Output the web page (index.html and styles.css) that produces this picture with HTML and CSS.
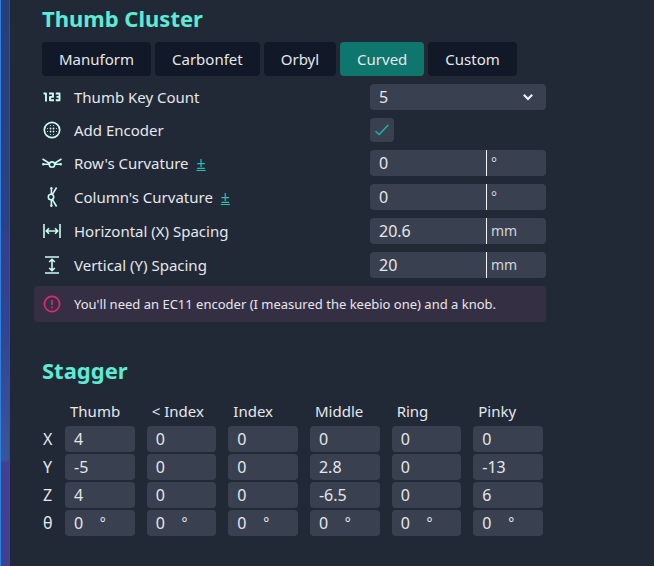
FILE: index.html
```html
<!DOCTYPE html>
<html lang="en">
<head>
<meta charset="utf-8">
<meta name="viewport" content="width=device-width, initial-scale=1">
<title>Keyboard Settings</title>
<link rel="stylesheet" href="styles.css">
</head>
<body>
<div class="rail"></div>
<main class="panel">
  <section class="section">
    <h2 class="title">Thumb Cluster</h2>
    <div class="tabs">
      <button class="tab" type="button">Manuform</button>
      <button class="tab" type="button">Carbonfet</button>
      <button class="tab" type="button">Orbyl</button>
      <button class="tab tab-active" type="button" aria-pressed="true">Curved</button>
      <button class="tab" type="button">Custom</button>
    </div>
    <div class="row">
      <svg class="icon" viewBox="0 0 20 20" stroke-width="1.900" stroke-linejoin="round"><path d="M1.500 6.500h2.500v8M7 6.500h4v3.400H8v3.400h4M13.800 6.500h3.700v6.800h-3.700M14.500 9.900h3"/></svg>
      <label class="name" for="count">Thumb Key Count</label>
      <div class="field">
        <select class="select" id="count"><option>5</option></select>
        <svg class="chevron" viewBox="0 0 12 12"><path d="M1.800 3.800 6 8l4.200-4.200"/></svg>
      </div>
    </div>
    <div class="row">
      <svg class="icon" viewBox="0 0 20 20" stroke-width="1.700"><circle cx="10" cy="10" r="7.700"/><path stroke-width="1.800" stroke-linecap="round" d="M8.500 8.500h0M11.500 8.500h0M8.500 11.500h0M11.500 11.500h0"/><path stroke-width="1" stroke-linecap="round" d="M8.500 5.500h0M11.500 5.500h0M5.500 8.500h0M14.500 8.500h0M5.500 11.500h0M14.500 11.500h0M8.500 14.500h0M11.500 14.500h0"/></svg>
      <label class="name" for="encoder">Add Encoder</label>
      <div class="field"><input class="check" id="encoder" type="checkbox" checked><svg class="tick" viewBox="0 0 16 16"><path d="m1.500 9.200 3.700 3.300 9-9.500"/></svg></div>
    </div>
    <div class="row">
      <svg class="icon" viewBox="0 0 20 20" stroke-width="1.600"><circle cx="10" cy="11.600" r="2.700"/><path d="M.5 6 7.400 10.200M12.600 10.200 19.500 6M1 11.200h6.400M12.600 11.200H19"/><path stroke-width="2.400" stroke-linecap="round" d="M1.200 11.200h0M18.800 11.200h0"/></svg>
      <div class="name"><label for="rows">Row's Curvature</label> <a class="sign" href="#rows">±</a></div>
      <div class="field split"><input class="input" id="rows" value="0"><span class="unit">°</span></div>
    </div>
    <div class="row">
      <svg class="icon" viewBox="0 0 20 20" stroke-width="1.600"><g transform="rotate(-90 10 10)"><circle cx="10" cy="9" r="2.700"/><path d="M.5 14.600 7.400 10.400M12.600 10.400l6.900 4.200M1 9.400h6.400M12.600 9.400H19"/><path stroke-width="2.400" stroke-linecap="round" d="M1.200 9.400h0M18.800 9.400h0"/></g></svg>
      <div class="name"><label for="columns">Column's Curvature</label> <a class="sign" href="#columns">±</a></div>
      <div class="field split"><input class="input" id="columns" value="0"><span class="unit">°</span></div>
    </div>
    <div class="row">
      <svg class="icon" viewBox="0 0 20 20" stroke-width="1.600"><path d="M2 3v14M18 3v14M4.500 10h11M7 7.200 4.300 10 7 12.800M13 7.200l2.700 2.800-2.700 2.800"/></svg>
      <label class="name" for="horizontal">Horizontal (X) Spacing</label>
      <div class="field split"><input class="input" id="horizontal" value="20.6"><span class="unit">mm</span></div>
    </div>
    <div class="row">
      <svg class="icon" viewBox="0 0 20 20" stroke-width="1.600"><path d="M3 2h14M3 18h14M10 4.500v11M7.200 7 10 4.300 12.800 7M7.200 13l2.800 2.700 2.800-2.700"/></svg>
      <label class="name" for="vertical">Vertical (Y) Spacing</label>
      <div class="field split"><input class="input" id="vertical" value="20"><span class="unit">mm</span></div>
    </div>
    <p class="notice">
      <svg class="icon icon-warn" viewBox="0 0 20 20" stroke-width="1.700"><circle cx="10" cy="10" r="7.600"/><path d="M10 6v5M10 12.600v1.700"/></svg>
      <span>You'll need an EC11 encoder (I measured the keebio one) and a knob.</span>
    </p>
  </section>

  <section class="section">
    <h2 class="title">Stagger</h2>
    <table class="stagger">
      <thead>
        <tr><td class="axis"></td><th scope="col">Thumb</th><th scope="col">&lt; Index</th><th scope="col">Index</th><th scope="col">Middle</th><th scope="col">Ring</th><th scope="col">Pinky</th></tr>
      </thead>
      <tbody>
        <tr><th class="axis" scope="row">X</th>
          <td><input class="cell" aria-label="Thumb X" value="4"></td><td><input class="cell" aria-label="Inner index X" value="0"></td><td><input class="cell" aria-label="Index X" value="0"></td><td><input class="cell" aria-label="Middle X" value="0"></td><td><input class="cell" aria-label="Ring X" value="0"></td><td><input class="cell" aria-label="Pinky X" value="0"></td></tr>
        <tr><th class="axis" scope="row">Y</th>
          <td><input class="cell" aria-label="Thumb Y" value="-5"></td><td><input class="cell" aria-label="Inner index Y" value="0"></td><td><input class="cell" aria-label="Index Y" value="0"></td><td><input class="cell" aria-label="Middle Y" value="2.8"></td><td><input class="cell" aria-label="Ring Y" value="0"></td><td><input class="cell" aria-label="Pinky Y" value="-13"></td></tr>
        <tr><th class="axis" scope="row">Z</th>
          <td><input class="cell" aria-label="Thumb Z" value="4"></td><td><input class="cell" aria-label="Inner index Z" value="0"></td><td><input class="cell" aria-label="Index Z" value="0"></td><td><input class="cell" aria-label="Middle Z" value="-6.5"></td><td><input class="cell" aria-label="Ring Z" value="0"></td><td><input class="cell" aria-label="Pinky Z" value="6"></td></tr>
        <tr><th class="axis" scope="row">θ</th>
          <td><div class="angle"><input class="cell" aria-label="Thumb angle" value="0"><span>°</span></div></td><td><div class="angle"><input class="cell" aria-label="Inner index angle" value="0"><span>°</span></div></td><td><div class="angle"><input class="cell" aria-label="Index angle" value="0"><span>°</span></div></td><td><div class="angle"><input class="cell" aria-label="Middle angle" value="0"><span>°</span></div></td><td><div class="angle"><input class="cell" aria-label="Ring angle" value="0"><span>°</span></div></td><td><div class="angle"><input class="cell" aria-label="Pinky angle" value="0"><span>°</span></div></td></tr>
      </tbody>
    </table>
  </section>
</main>
</body>
</html>
```
FILE: styles.css
```css
* { box-sizing: border-box; }

body {
  margin: 0;
  min-height: 100vh;
  display: flex;
  background: #212936;
  color: #e5e7eb;
  font: 15px/24px "Noto Sans", sans-serif;
}

button, input, select { font: inherit; color: inherit; }

.rail {
  flex: none;
  width: 10px;
  border-left: 1px solid #2f80df;
  border-right: 1px solid #454e5b;
  background: linear-gradient(#293d78 0, #2b4184 228px, #343e8c 232px, #334393 330px, #3b5599 459px, #423f94 463px, #41408f 100%);
}

.panel { flex: 1; min-width: 0; padding: 0 24px; }

.section { max-width: 512px; margin-bottom: 30px; }

.title {
  margin: 0 8px;
  padding: 2px 0 8px;
  color: #5eead4;
  font-size: 22px;
  line-height: 32px;
  font-weight: 700;
}

.tabs { display: flex; gap: 4px; margin: 0 8px; }

.tab {
  padding: 5px 17px;
  border: 0;
  border-radius: 4px;
  background: #111827;
}

.tab-active { background: #0f766e; }

.row {
  display: flex;
  align-items: center;
  margin: 8px 0 0 8px;
}

.icon {
  flex: none;
  width: 20px;
  height: 20px;
  margin-right: 12px;
  fill: none;
  stroke: #ccfbf1;
}

.icon-warn { stroke: #db2777; }

.name { flex: 1; line-height: 24px; }

.sign { margin-left: 4px; color: #2dbfae; font-size: 16px; }

.field { position: relative; display: flex; width: 176px; }

.select {
  appearance: none;
  width: 100%;
  height: 26px;
  padding: 0 9px;
  border: 0;
  border-radius: 4px;
  background: #394050;
  font-size: 16px;
}

.chevron {
  position: absolute;
  top: 7px;
  right: 12px;
  width: 12px;
  height: 12px;
  fill: none;
  stroke: #f3f4f6;
  stroke-width: 2;
  pointer-events: none;
}

.check {
  appearance: none;
  width: 24px;
  height: 24px;
  margin: 0;
  border-radius: 4px;
  background: #394050;
}

.tick {
  position: absolute;
  top: 4px;
  left: 4px;
  width: 16px;
  height: 16px;
  fill: none;
  stroke: #14b8a6;
  stroke-width: 1.5;
  pointer-events: none;
}

.split { height: 26px; border-radius: 4px; overflow: hidden; background: #394050; }

.input {
  flex: 1;
  min-width: 0;
  padding: 0 9px;
  border: 0;
  border-right: 1px solid #f3f4f6;
  background: none;
  font-size: 16px;
}

.unit { width: 59px; padding-left: 4px; font-size: 14px; line-height: 26px; color: #d1d5db; }

.notice {
  display: flex;
  align-items: center;
  margin: 8px 0 0;
  padding: 8px;
  border-radius: 4px;
  background: #352f43;
  font-size: 13px;
  line-height: 20px;
}

.stagger {
  width: 100%;
  margin: 2px 0 0 9px;
  table-layout: fixed;
  border-collapse: collapse;
}

.stagger th, .stagger td { padding: 0 12px 2px 0; text-align: left; font-weight: 400; }

.stagger thead th { padding: 3px 0 3px 5px; }

.stagger .axis { width: 22px; padding-right: 0; font-size: 16px; }

.cell {
  display: block;
  width: 100%;
  height: 26px;
  padding: 0 9px;
  border: 0;
  border-radius: 4px;
  background: #394050;
  font-size: 16px;
}

.angle { position: relative; }

.angle span {
  position: absolute;
  top: 0;
  left: 50%;
  font-size: 14px;
  line-height: 26px;
  pointer-events: none;
}
```
